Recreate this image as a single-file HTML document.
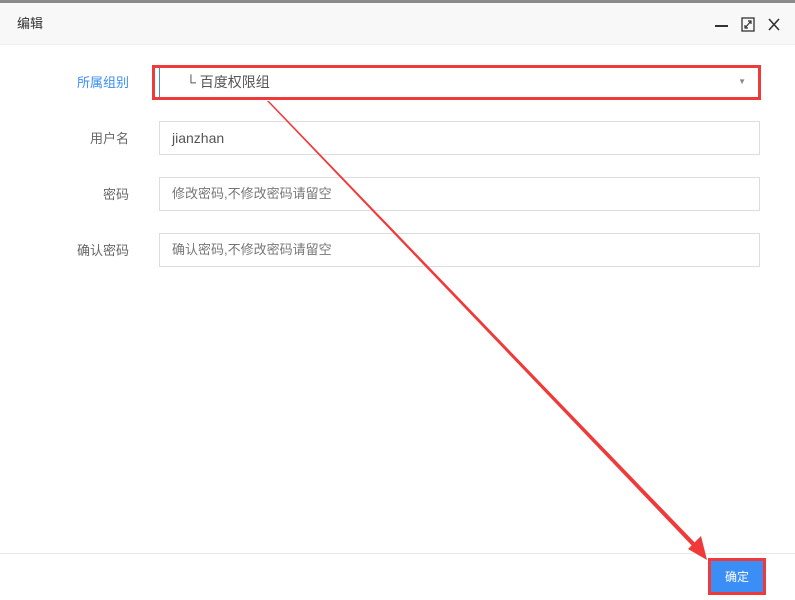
<!DOCTYPE html>
<html><head><meta charset="utf-8"><style>
body{margin:0;width:795px;height:600px;background:#fff;font-family:"Liberation Sans","Noto Sans CJK SC",sans-serif;position:relative;overflow:hidden}
.top{position:absolute;left:0;top:0;width:795px;height:3px;background:#8a8a8a}
.hd{position:absolute;left:0;top:3px;width:795px;height:41px;background:#f8f8f8;border-bottom:1px solid #eee}
.hd span{position:absolute;left:17px;top:10px;font-size:13px;color:#333}
.lbl{position:absolute;right:666px;font-size:13px;color:#666;text-align:right}
.inp{position:absolute;left:159px;width:601px;height:34px;border:1px solid #ddd;box-sizing:border-box;font-size:14px;color:#555;padding-left:12px;line-height:32px}
.ph{color:#777}
.ft{position:absolute;left:0;top:553px;width:795px;height:1px;background:#e8e8e8}
.btn{position:absolute;left:710px;top:561px;width:54px;height:32px;background:#3a8ef6;color:#fff;font-size:12px;text-align:center;line-height:32px;border-radius:2px}
.red{position:absolute;border:3px solid #f03a3a;box-sizing:border-box}
</style></head><body>
<div class="top"></div>
<div class="hd"><span>编辑</span>
<svg style="position:absolute;left:712px;top:12px" width="70" height="20">
<line x1="3" y1="11" x2="16" y2="11" stroke="#333" stroke-width="2"/>
<rect x="30" y="3" width="12" height="13" fill="none" stroke="#333" stroke-width="1.3"/>
<path d="M33 13 L39 6 M36 6 H39 V9 M33 10 V13 H36" fill="none" stroke="#333" stroke-width="1.2"/>
<path d="M57 4 L67 15 M67 4 L57 15" stroke="#333" stroke-width="1.6"/>
</svg></div>
<div class="lbl" style="top:72px;color:#3a8ef6">所属组别</div>
<div class="inp" style="top:65px;border-left:1px solid #3a8ef6;padding-left:26px">└ 百度权限组
<span style="position:absolute;right:13px;top:0;font-size:8px;color:#888">▼</span></div>
<div class="red" style="left:152px;top:65px;width:609px;height:35px"></div>
<div class="lbl" style="top:128px">用户名</div>
<div class="inp" style="top:121px">jianzhan</div>
<div class="lbl" style="top:184px">密码</div>
<div class="inp ph" style="top:177px;font-size:13px">修改密码,不修改密码请留空</div>
<div class="lbl" style="top:240px">确认密码</div>
<div class="inp ph" style="top:233px;font-size:13px">确认密码,不修改密码请留空</div>
<div class="ft"></div>
<svg style="position:absolute;left:0;top:0" width="795" height="600">
<polygon points="267,101 269,101 700,548 697,551" fill="#f03a3a"/>
<polygon points="707,560 688,549 701,536" fill="#f03a3a"/>
</svg>
<div class="btn">确定</div>
<div class="red" style="left:708px;top:558px;width:58px;height:37px"></div>
</body></html>
